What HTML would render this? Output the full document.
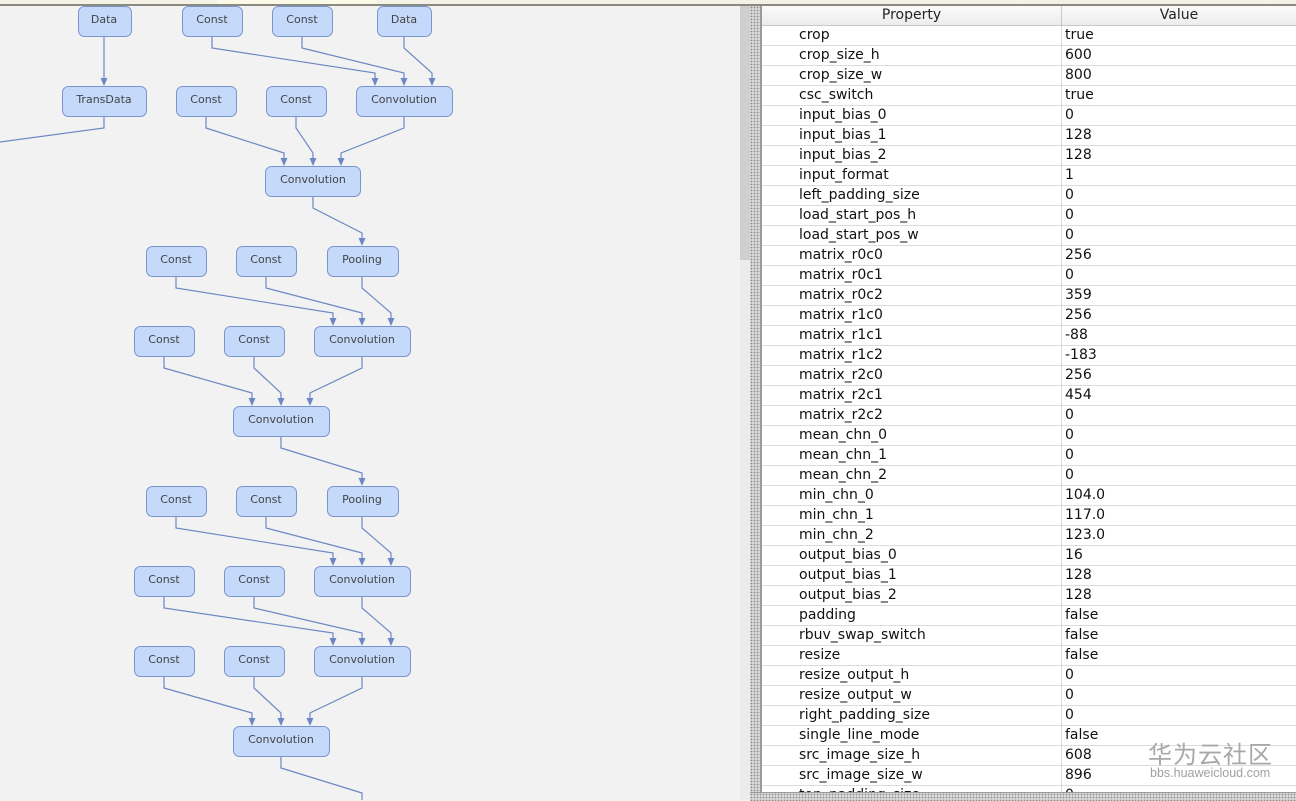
<!DOCTYPE html>
<html><head><meta charset="utf-8"><style>
html,body{margin:0;padding:0;width:1296px;height:800px;overflow:hidden;background:#f2f2f2;font-family:"DejaVu Sans","Liberation Sans",sans-serif}
#top{position:absolute;left:0;top:0;width:1296px;height:4px;background:#f4f2e6;border-bottom:2px solid #8a8a80}
#top .tab{position:absolute;left:217px;top:0;width:160px;height:4px;background:#fbf9e8}
#left{position:absolute;left:0;top:6px;width:740px;height:794px;background:#f2f2f2}
#sb{position:absolute;left:740px;top:6px;width:10px;height:794px;background:#ebebeb}
#thumb{position:absolute;left:740px;top:6px;width:10px;height:254px;background:#cfcfcf}
#div{position:absolute;left:750px;top:6px;width:10px;height:794px;background-color:#d8d8d8;background-image:radial-gradient(#888 0.7px,transparent 0.9px);background-size:3px 3px;border-right:2px solid #9a9a9a}
#tbl{position:absolute;left:762px;top:6px;width:534px;height:786px;background:#fff;overflow:hidden}
#bot{position:absolute;left:750px;top:792px;width:546px;height:8px;background-color:#d8d8d8;background-image:radial-gradient(#888 0.7px,transparent 0.9px);background-size:3px 3px;border-top:1px solid #9a9a9a}
.hd{position:absolute;top:0;height:19px;border-bottom:1px solid #c8c8c8;background:linear-gradient(#fbfbfb,#ececec);font-size:14px;text-align:center;line-height:19px;color:#222}
.row{position:absolute;left:0;width:534px;height:19px;border-bottom:1px solid #dcdcdc;font-size:14px;line-height:19px;color:#111}
.row .p{position:absolute;left:37px}
.row .v{position:absolute;left:303px}
.vl{position:absolute;left:299px;top:0;width:1px;height:800px;background:#dcdcdc}
#wm1{position:absolute;left:1148px;top:735px;font-family:"Noto Sans CJK SC",sans-serif;font-size:24px;color:#a8a8a8;letter-spacing:1px}
#wm2{position:absolute;left:1150px;top:766px;font-family:"Liberation Sans",sans-serif;font-size:12.5px;color:#a0a0a0}
</style></head><body>
<div id="left">
<svg width="740" height="794" viewBox="0 6 740 794" xmlns="http://www.w3.org/2000/svg" style="position:absolute;left:0;top:0">
<defs><marker id="a" markerWidth="10" markerHeight="10" refX="1" refY="4" orient="auto" markerUnits="userSpaceOnUse"><path d="M0,0.5 L8,4 L0,7.5 Z" fill="#6d88c4"/></marker></defs>
<g fill="none" stroke="#6d88c4" stroke-width="1.2" marker-end="url(#a)">
<path d="M104,36 L104,79"/>
<path d="M212,36 L212,48 L375,73 L375,79"/>
<path d="M302,36 L302,48 L404,73 L404,79"/>
<path d="M404,36 L404,48 L432,73 L432,79"/>
<path d="M206,116 L206,128 L284,153 L284,159"/>
<path d="M296,116 L296,128 L313,153 L313,159"/>
<path d="M404,116 L404,128 L341,153 L341,159"/>
<path d="M313,196 L313,208 L362,233 L362,239"/>
<path d="M176,276 L176,288 L333,313 L333,319"/>
<path d="M266,276 L266,288 L362,313 L362,319"/>
<path d="M362,276 L362,288 L391,313 L391,319"/>
<path d="M164,356 L164,368 L252,393 L252,399"/>
<path d="M254,356 L254,368 L281,393 L281,399"/>
<path d="M362,356 L362,368 L310,393 L310,399"/>
<path d="M281,436 L281,448 L362,473 L362,479"/>
<path d="M176,516 L176,528 L333,553 L333,559"/>
<path d="M266,516 L266,528 L362,553 L362,559"/>
<path d="M362,516 L362,528 L391,553 L391,559"/>
<path d="M164,596 L164,608 L333,633 L333,639"/>
<path d="M254,596 L254,608 L362,633 L362,639"/>
<path d="M362,596 L362,608 L391,633 L391,639"/>
<path d="M164,676 L164,688 L252,713 L252,719"/>
<path d="M254,676 L254,688 L281,713 L281,719"/>
<path d="M362,676 L362,688 L310,713 L310,719"/>
</g>
<g fill="none" stroke="#6d88c4" stroke-width="1.2">
<path d="M104,116 L104,128 L0,142"/>
<path d="M281,756 L281,768 L362,793 L362,800"/>
</g>
<g fill="#c5d9fb" stroke="#7b95cc" stroke-width="1">
<rect x="78.5" y="6.5" width="53" height="30" rx="6"/>
<rect x="182.5" y="6.5" width="60" height="30" rx="6"/>
<rect x="272.5" y="6.5" width="60" height="30" rx="6"/>
<rect x="377.5" y="6.5" width="54" height="30" rx="6"/>
<rect x="62.5" y="86.5" width="84" height="30" rx="6"/>
<rect x="176.5" y="86.5" width="60" height="30" rx="6"/>
<rect x="266.5" y="86.5" width="60" height="30" rx="6"/>
<rect x="356.5" y="86.5" width="96" height="30" rx="6"/>
<rect x="265.5" y="166.5" width="95" height="30" rx="6"/>
<rect x="146.5" y="246.5" width="60" height="30" rx="6"/>
<rect x="236.5" y="246.5" width="60" height="30" rx="6"/>
<rect x="327.5" y="246.5" width="71" height="30" rx="6"/>
<rect x="134.5" y="326.5" width="60" height="30" rx="6"/>
<rect x="224.5" y="326.5" width="60" height="30" rx="6"/>
<rect x="314.5" y="326.5" width="96" height="30" rx="6"/>
<rect x="233.5" y="406.5" width="96" height="30" rx="6"/>
<rect x="146.5" y="486.5" width="60" height="30" rx="6"/>
<rect x="236.5" y="486.5" width="60" height="30" rx="6"/>
<rect x="327.5" y="486.5" width="71" height="30" rx="6"/>
<rect x="134.5" y="566.5" width="60" height="30" rx="6"/>
<rect x="224.5" y="566.5" width="60" height="30" rx="6"/>
<rect x="314.5" y="566.5" width="96" height="30" rx="6"/>
<rect x="134.5" y="646.5" width="60" height="30" rx="6"/>
<rect x="224.5" y="646.5" width="60" height="30" rx="6"/>
<rect x="314.5" y="646.5" width="96" height="30" rx="6"/>
<rect x="233.5" y="726.5" width="96" height="30" rx="6"/>
</g>
<g font-family="DejaVu Sans, sans-serif" font-size="11" fill="#444" text-anchor="middle">
<text x="104" y="23">Data</text><text x="212" y="23">Const</text><text x="302" y="23">Const</text><text x="404" y="23">Data</text>
<text x="104" y="103">TransData</text><text x="206" y="103">Const</text><text x="296" y="103">Const</text><text x="404" y="103">Convolution</text>
<text x="313" y="183">Convolution</text>
<text x="176" y="263">Const</text><text x="266" y="263">Const</text><text x="362" y="263">Pooling</text>
<text x="164" y="343">Const</text><text x="254" y="343">Const</text><text x="362" y="343">Convolution</text>
<text x="281" y="423">Convolution</text>
<text x="176" y="503">Const</text><text x="266" y="503">Const</text><text x="362" y="503">Pooling</text>
<text x="164" y="583">Const</text><text x="254" y="583">Const</text><text x="362" y="583">Convolution</text>
<text x="164" y="663">Const</text><text x="254" y="663">Const</text><text x="362" y="663">Convolution</text>
<text x="281" y="743">Convolution</text>
</g>
</svg>
</div>
<div id="top"><div class="tab"></div></div>
<div id="sb"></div><div id="thumb"></div>
<div id="div"></div>
<div id="tbl">
<div class="vl"></div>
<div class="hd" style="left:0;width:299px;border-right:1px solid #c8c8c8">Property</div>
<div class="hd" style="left:300px;width:234px">Value</div>
<div class="row" style="top:20px"><span class="p">crop</span><span class="v">true</span></div>
<div class="row" style="top:40px"><span class="p">crop_size_h</span><span class="v">600</span></div>
<div class="row" style="top:60px"><span class="p">crop_size_w</span><span class="v">800</span></div>
<div class="row" style="top:80px"><span class="p">csc_switch</span><span class="v">true</span></div>
<div class="row" style="top:100px"><span class="p">input_bias_0</span><span class="v">0</span></div>
<div class="row" style="top:120px"><span class="p">input_bias_1</span><span class="v">128</span></div>
<div class="row" style="top:140px"><span class="p">input_bias_2</span><span class="v">128</span></div>
<div class="row" style="top:160px"><span class="p">input_format</span><span class="v">1</span></div>
<div class="row" style="top:180px"><span class="p">left_padding_size</span><span class="v">0</span></div>
<div class="row" style="top:200px"><span class="p">load_start_pos_h</span><span class="v">0</span></div>
<div class="row" style="top:220px"><span class="p">load_start_pos_w</span><span class="v">0</span></div>
<div class="row" style="top:240px"><span class="p">matrix_r0c0</span><span class="v">256</span></div>
<div class="row" style="top:260px"><span class="p">matrix_r0c1</span><span class="v">0</span></div>
<div class="row" style="top:280px"><span class="p">matrix_r0c2</span><span class="v">359</span></div>
<div class="row" style="top:300px"><span class="p">matrix_r1c0</span><span class="v">256</span></div>
<div class="row" style="top:320px"><span class="p">matrix_r1c1</span><span class="v">-88</span></div>
<div class="row" style="top:340px"><span class="p">matrix_r1c2</span><span class="v">-183</span></div>
<div class="row" style="top:360px"><span class="p">matrix_r2c0</span><span class="v">256</span></div>
<div class="row" style="top:380px"><span class="p">matrix_r2c1</span><span class="v">454</span></div>
<div class="row" style="top:400px"><span class="p">matrix_r2c2</span><span class="v">0</span></div>
<div class="row" style="top:420px"><span class="p">mean_chn_0</span><span class="v">0</span></div>
<div class="row" style="top:440px"><span class="p">mean_chn_1</span><span class="v">0</span></div>
<div class="row" style="top:460px"><span class="p">mean_chn_2</span><span class="v">0</span></div>
<div class="row" style="top:480px"><span class="p">min_chn_0</span><span class="v">104.0</span></div>
<div class="row" style="top:500px"><span class="p">min_chn_1</span><span class="v">117.0</span></div>
<div class="row" style="top:520px"><span class="p">min_chn_2</span><span class="v">123.0</span></div>
<div class="row" style="top:540px"><span class="p">output_bias_0</span><span class="v">16</span></div>
<div class="row" style="top:560px"><span class="p">output_bias_1</span><span class="v">128</span></div>
<div class="row" style="top:580px"><span class="p">output_bias_2</span><span class="v">128</span></div>
<div class="row" style="top:600px"><span class="p">padding</span><span class="v">false</span></div>
<div class="row" style="top:620px"><span class="p">rbuv_swap_switch</span><span class="v">false</span></div>
<div class="row" style="top:640px"><span class="p">resize</span><span class="v">false</span></div>
<div class="row" style="top:660px"><span class="p">resize_output_h</span><span class="v">0</span></div>
<div class="row" style="top:680px"><span class="p">resize_output_w</span><span class="v">0</span></div>
<div class="row" style="top:700px"><span class="p">right_padding_size</span><span class="v">0</span></div>
<div class="row" style="top:720px"><span class="p">single_line_mode</span><span class="v">false</span></div>
<div class="row" style="top:740px"><span class="p">src_image_size_h</span><span class="v">608</span></div>
<div class="row" style="top:760px"><span class="p">src_image_size_w</span><span class="v">896</span></div>
<div class="row" style="top:780px"><span class="p">top_padding_size</span><span class="v">0</span></div>
</div>
<div id="bot"></div>
<div id="wm1">华为云社区</div>
<div id="wm2">bbs.huaweicloud.com</div>
</body></html>
